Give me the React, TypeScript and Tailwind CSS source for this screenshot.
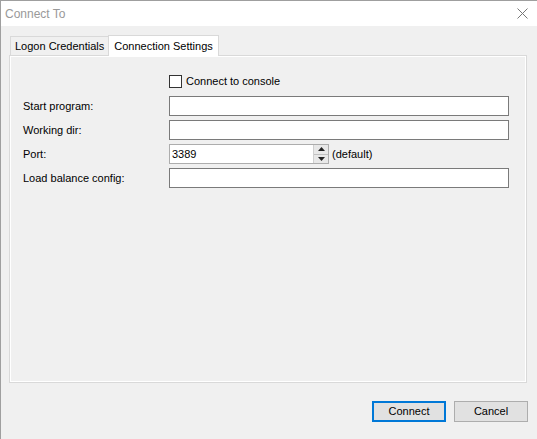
const font = { fontFamily: '"Liberation Sans", Arial, sans-serif' };

const Field = ({ label, value }: { label: string; value?: string }) => (
  <div className="flex items-center h-[20px]">
    <div className="w-[146px] text-[11px] text-black">{label}</div>
    <div className="w-[340px] h-[20px] bg-white border border-[#7a7a7a] text-[11px] px-[2px] leading-[18px]">
      {value}
    </div>
  </div>
);

export default function App() {
  return (
    <div
      className="w-[537px] h-[439px] border-l border-t border-[#9f9f9f] bg-[#f0f0f0] flex flex-col overflow-hidden"
      style={font}
    >
      <div className="h-[25px] bg-white flex items-center justify-between pl-[4px] pr-[9px]">
        <span className="text-[12px] text-[#999999]">Connect To</span>
        <svg width="11" height="11" viewBox="0 0 11 11" className="text-[#777]">
          <path d="M0.5 0.5 L10.5 10.5 M10.5 0.5 L0.5 10.5" stroke="currentColor" strokeWidth="1" />
        </svg>
      </div>

      <div className="flex-1 flex flex-col px-[8px] pt-[8px]">
        <div className="flex items-end h-[21px] text-[11px] text-black">
          <div className="ml-[1px] h-[19px] px-[4px] flex items-center bg-[#f0f0f0] border border-b-0 border-r-0 border-[#d9d9d9]">
            Logon Credentials
          </div>
          <div className="h-[21px] px-[5px] flex items-center bg-white border border-b-0 border-[#d9d9d9] -mb-px relative z-10">
            Connection Settings
          </div>
        </div>

        <div className="w-[518px] h-[328px] border border-[#d9d9d9] bg-white p-px">
          <div className="w-full h-full bg-[#f0f0f0] pl-[12px] pt-[18px] flex flex-col">
            <div className="flex items-center h-[13px] pl-[146px]">
              <div className="w-[13px] h-[13px] border border-[#333] bg-white" />
              <span className="ml-[4px] text-[11px] text-black">Connect to console</span>
            </div>
            <div className="mt-[8px] flex flex-col gap-[4px]">
              <Field label="Start program:" />
              <Field label="Working dir:" />
              <div className="flex items-center h-[20px]">
                <div className="w-[146px] text-[11px] text-black">Port:</div>
                <div className="w-[160px] h-[20px] bg-white border border-[#adadad] flex">
                  <div className="flex-1 text-[11px] px-[2px] leading-[18px]">3389</div>
                  <div className="w-[15px] flex flex-col border-l border-[#d0d0d0]">
                    <div className="flex-1 bg-[#e8e8e8] border-b border-[#c0c0c0] flex items-center justify-center">
                      <svg width="7" height="4" viewBox="0 0 7 4"><path d="M3.5 0 L7 4 L0 4 Z" fill="#222" /></svg>
                    </div>
                    <div className="flex-1 bg-[#e8e8e8] flex items-center justify-center">
                      <svg width="7" height="4" viewBox="0 0 7 4"><path d="M0 0 L7 0 L3.5 4 Z" fill="#222" /></svg>
                    </div>
                  </div>
                </div>
                <span className="ml-[3px] text-[11px] text-black">(default)</span>
              </div>
              <Field label="Load balance config:" />
            </div>
          </div>
        </div>

        <div className="flex justify-end gap-[8px] mt-[18px] pr-[1px]">
          <button className="w-[74px] h-[21px] bg-[#e1e1e1] border-2 border-[#0078d7] text-[11px] text-black">
            Connect
          </button>
          <button className="w-[74px] h-[21px] bg-[#e1e1e1] border border-[#adadad] text-[11px] text-black">
            Cancel
          </button>
        </div>
      </div>
    </div>
  );
}
